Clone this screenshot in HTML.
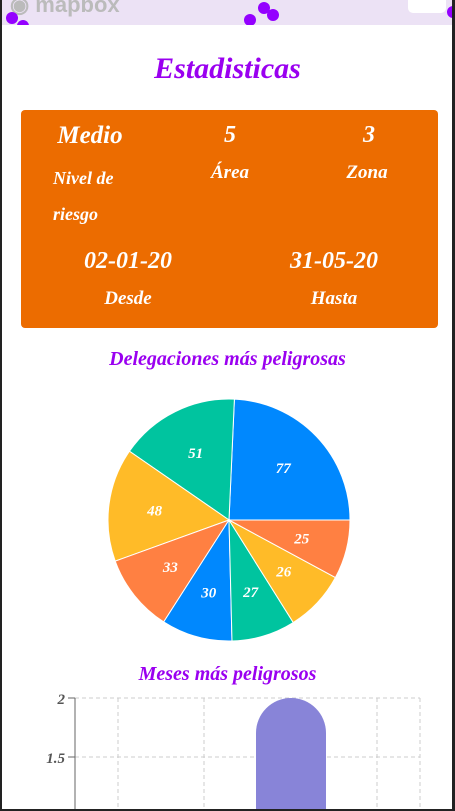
<!DOCTYPE html>
<html><head><meta charset="utf-8"><style>
body{margin:0;width:455px;height:811px;overflow:hidden;background:#fff;font-family:"Liberation Serif",serif;font-style:italic;font-weight:bold;position:relative}
.map{position:absolute;left:0;top:0;width:455px;height:25px;background:#ece2f5;overflow:hidden}
.dot{position:absolute;width:12px;height:12px;border-radius:50%;background:#9400ff}
.t{position:absolute;width:100%;text-align:center;color:#9a00f0}
.card{position:absolute;left:21px;top:110px;width:417px;height:218px;background:#ec6c00;border-radius:4px;color:#fff}
.c{position:absolute;text-align:center;color:#fff}
.bl{position:absolute;left:0;top:0;width:2px;height:811px;background:#222}
.br{position:absolute;right:0;top:0;width:3px;height:811px;background:#222}
.bb{position:absolute;left:0;bottom:0;width:455px;height:2px;background:#222}
</style></head><body>
<div class="map">
<div style="position:absolute;left:10px;top:-8px;color:#bbb;font:bold 22px 'Liberation Sans',sans-serif">◉ mapbox</div>
<div class="dot" style="left:6px;top:12px"></div><div class="dot" style="left:17px;top:20px"></div>
<div class="dot" style="left:258px;top:2px"></div><div class="dot" style="left:267px;top:9px"></div><div class="dot" style="left:244px;top:14px"></div>
<div class="dot" style="left:447px;top:6px"></div>
<div style="position:absolute;left:408px;top:-5px;width:38px;height:18px;background:#fff;border-radius:5px"></div>
</div>
<div class="t" style="top:52px;font-size:30px">Estadisticas</div>
<div class="card">
<div class="c" style="left:19px;top:12px;width:100px;font-size:25px">Medio</div>
<div class="c" style="left:169px;top:12px;width:80px;font-size:24px">5</div>
<div class="c" style="left:308px;top:12px;width:80px;font-size:24px">3</div>
<div class="c" style="left:32px;top:50px;width:100px;font-size:18px;text-align:left;line-height:36px">Nivel de<br>riesgo</div>
<div class="c" style="left:169px;top:52px;width:80px;font-size:19px">Área</div>
<div class="c" style="left:306px;top:52px;width:80px;font-size:19px">Zona</div>
<div class="c" style="left:37px;top:138px;width:140px;font-size:24px">02-01-20</div>
<div class="c" style="left:243px;top:138px;width:140px;font-size:24px">31-05-20</div>
<div class="c" style="left:37px;top:178px;width:140px;font-size:19px">Desde</div>
<div class="c" style="left:243px;top:178px;width:140px;font-size:19px">Hasta</div>
</div>
<div class="t" style="top:348px;font-size:20px">Delegaciones más peligrosas</div>
<svg id="pie" style="position:absolute;left:0;top:0" width="455" height="811"></svg>
<div class="t" style="top:663px;font-size:20px">Meses más peligrosos</div>
<svg style="position:absolute;left:0;top:690px" width="455" height="121">
<g stroke="#ccc" stroke-dasharray="4 3" fill="none">
<line x1="75" y1="8" x2="420" y2="8"/><line x1="75" y1="67" x2="420" y2="67"/>
<line x1="118" y1="8" x2="118" y2="121"/><line x1="204" y1="8" x2="204" y2="121"/><line x1="377" y1="8" x2="377" y2="121"/><line x1="420" y1="8" x2="420" y2="121"/>
</g>
<line x1="75" y1="8" x2="75" y2="121" stroke="#666"/>
<line x1="68" y1="8" x2="75" y2="8" stroke="#666"/><line x1="68" y1="67" x2="75" y2="67" stroke="#666"/>
<text x="65" y="14" text-anchor="end" fill="#555" font-size="15" font-style="italic" font-weight="bold">2</text>
<text x="65" y="73" text-anchor="end" fill="#555" font-size="15" font-style="italic" font-weight="bold">1.5</text>
<path d="M256 121 V43 A35 35 0 0 1 326 43 V121 Z" fill="#8884d8"/>
</svg>
<div class="bl"></div><div class="br"></div><div class="bb"></div>
<script>
var d=[[77,"#0088FE"],[51,"#00C49F"],[48,"#FFBB28"],[33,"#FF8042"],[30,"#0088FE"],[27,"#00C49F"],[26,"#FFBB28"],[25,"#FF8042"]];
var cx=229,cy=520,r=121,tot=0;d.forEach(function(x){tot+=x[0]});
var a=0,s="";
d.forEach(function(x){var b=a+x[0]/tot*2*Math.PI;
var x1=cx+r*Math.cos(a),y1=cy-r*Math.sin(a),x2=cx+r*Math.cos(b),y2=cy-r*Math.sin(b);
s+='<path d="M'+cx+' '+cy+' L'+x1+' '+y1+' A'+r+' '+r+' 0 '+((b-a)>Math.PI?1:0)+' 0 '+x2+' '+y2+' Z" fill="'+x[1]+'" stroke="#fff"/>';
var m=(a+b)/2,lr=r*0.62;
s+='<text x="'+(cx+lr*Math.cos(m))+'" y="'+(cy-lr*Math.sin(m)+5)+'" text-anchor="middle" fill="#fff" font-size="15" font-style="italic" font-weight="bold">'+x[0]+'</text>';
a=b;});
document.getElementById("pie").innerHTML=s;
</script>
</body></html>
